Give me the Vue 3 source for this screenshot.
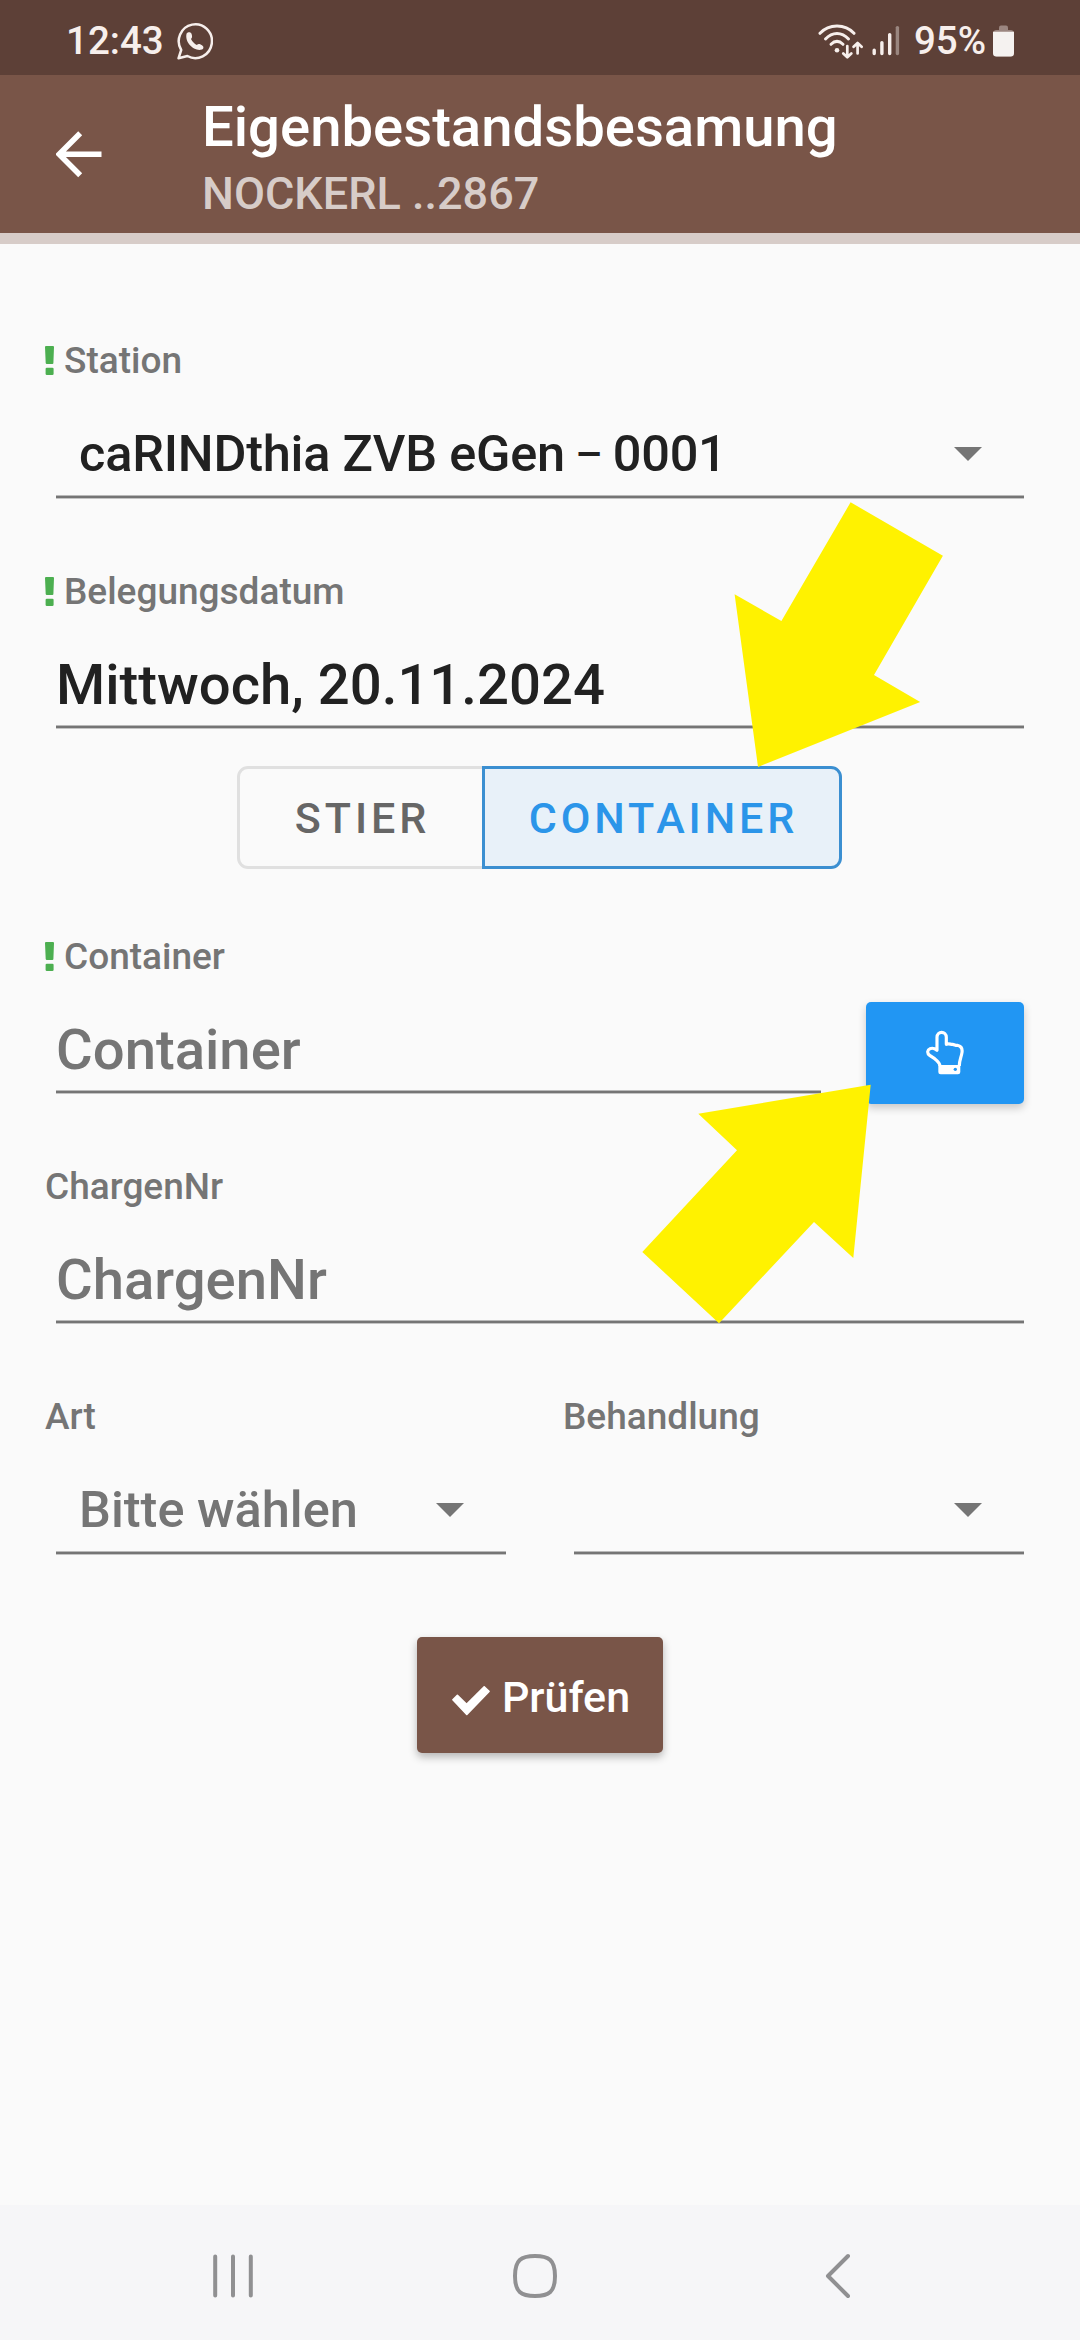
<script setup>
import { ref } from 'vue'

const station = ref({ name: 'caRINDthia ZVB eGen', nr: '0001' })
const datum = ref('Mittwoch, 20.11.2024')
const modes = ['STIER', 'CONTAINER']
const mode = ref('CONTAINER')
const art = ref('')
const behandlung = ref('')
</script>

<template>
    <div class="screen">
        <div class="status-bar">
            <span class="clock">12:43</span>
            <svg class="icon-whatsapp" width="36" height="38" viewBox="0 0 36 38">
                <path d="M1.5 36.3 L4.2 28 A16.6 16.9 0 1 1 10.4 34 Z" fill="none" stroke="#f7efec" stroke-width="2.5" stroke-linejoin="round" />
                <path d="M9.6 11.6 C11 9.6 14 9.8 14.6 12 C15.4 14.8 15.2 15.4 14 17 C15.4 19.8 17.4 21.8 19.8 23 C21.4 21.4 22.4 21.6 25 23.2 C27.4 24.8 26.6 27.4 24 27.8 C16.4 29 7.4 20.4 9.6 11.6 Z" fill="#f7efec" />
            </svg>
            <div class="status-right">
                <svg class="icon-wifi" width="46" height="36" viewBox="0 0 46 36">
                    <g fill="none" stroke="#f7efec" stroke-width="3" stroke-linecap="round" stroke-linejoin="round">
                        <path d="M2 10.3 C11 0.6 27 0.6 36 10.3" />
                        <path d="M7.5 16 C14.3 8.6 23.7 8.6 30.5 16" />
                        <path d="M13 21.3 C16.8 17.6 21.2 17.6 25 21.3" />
                        <path d="M29.3 23 V34 M25.3 30.5 L29.3 34.3 L33.3 30.5 M39.6 30.5 V20.5 M35.6 23.8 L39.6 20 L43.6 23.8" stroke-width="2.7" />
                    </g>
                    <circle cx="19" cy="27.2" r="2.3" fill="#f7efec" />
                </svg>
                <svg class="icon-signal" width="28" height="32" viewBox="0 0 28 32">
                    <g stroke="#f7efec" stroke-width="3.4" stroke-linecap="round">
                        <path d="M2.2 25.3 V28.6 M9.9 17.6 V28.6 M17.7 9.6 V28.6" />
                        <path d="M25.4 2.6 V28.6" opacity="0.4" />
                    </g>
                </svg>
                <span class="percent">95%</span>
                <svg class="icon-battery" width="21" height="32" viewBox="0 0 21 32">
                    <path d="M6 7 V2.6 Q6 0.6 8 0.6 H13 Q15 0.6 15 2.6 V7 Z" fill="#9b8680" />
                    <rect x="0" y="5" width="21" height="26.5" rx="3.5" fill="#9b8680" />
                    <path d="M0 6.7 H21 V28 Q21 31.5 17.5 31.5 H3.5 Q0 31.5 0 28 Z" fill="#f5f2f0" />
                </svg>
            </div>
        </div>

        <div class="app-bar">
            <svg class="icon-back" width="47" height="47" viewBox="0 0 47 47">
                <path d="M45.5 23.2 H5 M24.2 2.2 L3.2 23.2 L24.2 44.2" fill="none" stroke="#fff" stroke-width="5.6" />
            </svg>
            <div class="titles">
                <div class="title">Eigenbestandsbesamung</div>
                <div class="subtitle">NOCKERL ..2867</div>
            </div>
        </div>

        <div class="content">
            <div class="field">
                <div class="label">
                    <svg class="required" width="9" height="29" viewBox="0 0 9 29">
                        <path d="M1 0 H8 Q9 0 9 1 L8.4 17 Q8.4 18 7.4 18 H1.8 Q0.8 18 0.7 17 L0 1 Q0 0 1 0 Z" />
                        <rect x="0.6" y="21.7" width="8" height="7.3" rx="1.2" />
                    </svg>
                    <span>Station</span>
                </div>
                <div class="control select">
                    <span class="value station">{{ station.name }}<span class="dash"> – </span>{{ station.nr }}</span>
                    <span class="caret"></span>
                </div>
            </div>

            <div class="field">
                <div class="label">
                    <svg class="required" width="9" height="29" viewBox="0 0 9 29">
                        <path d="M1 0 H8 Q9 0 9 1 L8.4 17 Q8.4 18 7.4 18 H1.8 Q0.8 18 0.7 17 L0 1 Q0 0 1 0 Z" />
                        <rect x="0.6" y="21.7" width="8" height="7.3" rx="1.2" />
                    </svg>
                    <span>Belegungsdatum</span>
                </div>
                <div class="control">
                    <span class="value">{{ datum }}</span>
                </div>
            </div>

            <div class="toggle">
                <button
                    v-for="m in modes"
                    :key="m"
                    type="button"
                    class="toggle-btn"
                    :class="{ active: m === mode }"
                    @click="mode = m"
                >{{ m }}</button>
            </div>

            <div class="field">
                <div class="label">
                    <svg class="required" width="9" height="29" viewBox="0 0 9 29">
                        <path d="M1 0 H8 Q9 0 9 1 L8.4 17 Q8.4 18 7.4 18 H1.8 Q0.8 18 0.7 17 L0 1 Q0 0 1 0 Z" />
                        <rect x="0.6" y="21.7" width="8" height="7.3" rx="1.2" />
                    </svg>
                    <span>Container</span>
                </div>
                <div class="with-button">
                    <div class="control">
                        <span class="value placeholder">Container</span>
                    </div>
                    <button type="button" class="pick-btn">
                        <svg width="37.3" height="45.3" viewBox="80 150 112 136">
                            <path d="M122 258 C122 249 116 244 106 236 L91 226 C82 220 84 209 92 206 C100 203 106 205 113 211 V172 C113 152 141 152 141 172 V193 C150 189 154 194 160 193 C166 194 170 197 174 196 C184 198 190 206 188 218 C186 232 180 240 180 258" fill="none" stroke="#fff" stroke-width="9.5" stroke-linejoin="round" />
                            <path d="M117 255 H183 V276 Q183 283 176 283 H124 Q117 283 117 276 Z" fill="#fff" />
                            <circle cx="168" cy="268" r="5" fill="#2196f3" />
                        </svg>
                    </button>
                </div>
            </div>

            <div class="field">
                <div class="label"><span>ChargenNr</span></div>
                <div class="control">
                    <span class="value placeholder">ChargenNr</span>
                </div>
            </div>

            <div class="field-row">
                <div class="field">
                    <div class="label"><span>Art</span></div>
                    <div class="control select">
                        <span class="value placeholder">{{ art || 'Bitte wählen' }}</span>
                        <span class="caret"></span>
                    </div>
                </div>
                <div class="field">
                    <div class="label"><span>Behandlung</span></div>
                    <div class="control select">
                        <span class="value">{{ behandlung }}</span>
                        <span class="caret"></span>
                    </div>
                </div>
            </div>

            <button type="button" class="check-btn">
                <svg width="38" height="30" viewBox="0 0 38 30">
                    <path d="M0.9 13.8 L5.4 9.3 L14.6 18.4 L32.2 0.8 L37 5.4 L14.8 28.4 Z" fill="#fff" stroke="#fff" stroke-width="1.6" stroke-linejoin="round" />
                </svg>
                <span>Prüfen</span>
            </button>
        </div>

        <div class="nav-bar">
            <svg width="44" height="48" viewBox="0 0 44 48">
                <path d="M4.2 4.5 V43.5 M22 4.5 V43.5 M39.8 4.5 V43.5" stroke="#909092" stroke-width="4" stroke-linecap="round" />
            </svg>
            <svg class="nav-home" width="48" height="48" viewBox="0 0 48 48">
                <path d="M24 4 C38 4 44 8 44 24 C44 40 38 44 24 44 C10 44 4 40 4 24 C4 8 10 4 24 4 Z" fill="none" stroke="#909092" stroke-width="4" />
            </svg>
            <svg width="28" height="48" viewBox="0 0 28 48">
                <path d="M24 4 L4 24 L24 44" fill="none" stroke="#909092" stroke-width="4" stroke-linecap="round" stroke-linejoin="round" />
            </svg>
        </div>

        <!-- hint arrows lying over the form -->
        <svg class="hints" width="1080" height="2340" viewBox="0 0 1080 2340">
            <polygon points="850.6,502.3 942.9,555.7 874,675 920.2,702 758,766.9 734.6,594.3 781.4,621" />
            <polygon points="870.7,1084.7 853.3,1258 814,1222 719,1323.3 642.3,1252 737,1150.3 698.3,1113.7" />
        </svg>
    </div>
</template>

<style>
body {
    margin: 0;
    background: #fafafa;
}
</style>

<style scoped>
.screen {
    position: relative;
    display: flex;
    flex-direction: column;
    width: 1080px;
    height: 2340px;
    overflow: hidden;
    background: #fafafa;
    font-family: Roboto, "Noto Sans", sans-serif;
    font-weight: 500;
}

button {
    font-family: inherit;
    font-weight: 500;
    border: 0;
    padding: 0;
}

.status-bar {
    display: flex;
    align-items: center;
    box-sizing: border-box;
    height: 75px;
    padding: 7px 66px 0 66px;
    background: #5d4037;
    color: #f7efec;
    font-size: 38.5px;
    line-height: 44px;
}

.icon-whatsapp {
    margin-left: 13px;
}

.status-right {
    display: flex;
    align-items: center;
    margin-left: auto;
}

.icon-signal {
    margin-left: 8px;
}

.percent {
    margin-left: 14px;
}

.icon-battery {
    margin-left: 7px;
}

.app-bar {
    display: flex;
    align-items: center;
    box-sizing: border-box;
    height: 169px;
    padding-left: 56px;
    background: #795548;
    border-bottom: 11px solid #d7ccc8;
}

.titles {
    margin-left: 99px;
    padding-top: 8px;
}

.title {
    color: #fff;
    font-size: 56.25px;
    line-height: 72px;
}

.subtitle {
    color: #d7ccc8;
    font-size: 45px;
    line-height: 62px;
}

.content {
    display: flex;
    flex-direction: column;
    flex: 1;
    padding: 95px 56px 0 56px;
}

.field + .field,
.field + .field-row {
    margin-top: 71px;
}

.label {
    display: flex;
    align-items: center;
    height: 44px;
    margin-left: -11px;
    color: #757575;
    font-size: 37px;
    line-height: 44px;
}

.required {
    margin: -2px 10px 0 0;
    fill: #4caf50;
}

.control {
    display: flex;
    align-items: center;
    box-sizing: border-box;
    height: 115px;
    padding: 31px 0 4px 0;
    background: linear-gradient(#b9b9b9 1px, #757575 1px, #757575 3px, #c4c4c4 3px) bottom / 100% 4px no-repeat;
    color: #212121;
    font-size: 56.25px;
    line-height: 66px;
}

.control.select {
    justify-content: space-between;
    height: 116px;
    padding: 30px 42px 4px 23px;
    font-size: 50.5px;
}

.station {
    letter-spacing: -0.22px;
    white-space: pre;
}

.dash {
    position: relative;
    top: -2px;
    font-size: 42.5px;
    line-height: 1;
}

.placeholder {
    color: #757575;
}

.caret {
    width: 28px;
    height: 14px;
    margin-left: auto;
    background: #757575;
    clip-path: polygon(0 0, 100% 0, 50% 100%);
}

.toggle {
    display: flex;
    align-self: center;
    margin: 37px 0 66px -1px;
}

.toggle-btn {
    box-sizing: border-box;
    width: 248px;
    height: 103px;
    padding-left: 3px;
    border: 3px solid #e0e0e0;
    border-radius: 11px 0 0 11px;
    background: transparent;
    color: #666;
    font-size: 43px;
    letter-spacing: 3.9px;
}

.toggle-btn + .toggle-btn {
    width: 360px;
    margin-left: -3px;
    border-radius: 0 11px 11px 0;
}

.toggle-btn.active {
    border-color: #3b8fd1;
    background: #e8f1f9;
    color: #2b95e9;
}

.with-button {
    display: flex;
    justify-content: space-between;
}

.with-button .control {
    width: 765px;
}

.pick-btn {
    display: flex;
    align-items: center;
    justify-content: center;
    width: 158px;
    height: 102px;
    margin-top: 23px;
    margin-bottom: -10px;
    border-radius: 5px;
    background: #2196f3;
    box-shadow: 0 4px 9px rgba(0, 0, 0, 0.2);
}

.field-row {
    display: flex;
    justify-content: space-between;
}

.field-row .field {
    width: 450px;
    margin-top: 0;
}

.check-btn {
    display: flex;
    align-items: center;
    justify-content: center;
    align-self: center;
    box-sizing: border-box;
    width: 246px;
    height: 116px;
    margin-top: 82px;
    padding-left: 2px;
    border-radius: 5px;
    background: #795548;
    box-shadow: 0 4px 9px rgba(0, 0, 0, 0.28);
    color: #fff;
    font-size: 43px;
    line-height: 50px;
}

.check-btn svg {
    margin: 12px 12px 0 0;
}

.check-btn span {
    margin-top: 4px;
}

.nav-bar {
    display: flex;
    align-items: center;
    justify-content: space-between;
    box-sizing: border-box;
    height: 135px;
    padding: 7px 228px 0 211px;
    background: #f6f6f8;
}

.nav-home {
    margin-right: 10px;
}

.hints {
    position: absolute;
    top: 0;
    left: 0;
    fill: #fff200;
    pointer-events: none;
}
</style>
